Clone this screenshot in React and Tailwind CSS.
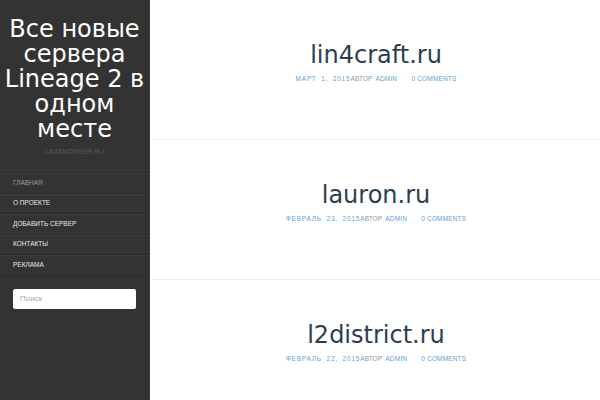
import React from "react";

const posts = [
  { title: "lin4craft.ru", date: "Март 1, 2015" },
  { title: "lauron.ru", date: "Февраль 23, 2015" },
  { title: "l2district.ru", date: "Февраль 22, 2015" },
];

const menu = ["Главная", "О проекте", "Добавить сервер", "Контакты", "Реклама"];

export default function App() {
  return (
    <div className="flex w-[600px] h-[400px] overflow-hidden bg-white font-['DejaVu_Sans',sans-serif]">
      {/* Sidebar */}
      <aside className="w-[150px] shrink-0 bg-[#333333] border-r border-[#3a3a3a] flex flex-col">
        <h1 className="pt-[17px] px-1 text-center text-white text-[24px] leading-[25px] font-normal">
          Все новые сервера Lineage 2 в одном месте
        </h1>
        <p className="mt-[5px] text-center text-[7px] text-[#5a5a5a] font-['Liberation_Sans',sans-serif] leading-[10px]">
          LA2ANONSER.RU
        </p>
        <nav className="mt-[15px] border-t border-[#2a2a2a]">
          {menu.map((item, i) => (
            <div
              key={item}
              className={`h-[20.5px] flex items-center pl-[13px] border-b border-[#2a2a2a] shadow-[inset_0_1px_0_#3c3c3c] text-[6.5px] uppercase font-['Liberation_Sans',sans-serif] ${
                i === 0 ? "text-[#9a9a9a]" : "text-[#e6e6e6]"
              }`}
            >
              {item}
            </div>
          ))}
        </nav>
        <div className="px-[13px] mt-[13px]">
          <div className="h-[20px] bg-white rounded-[2px] flex items-center pl-[7px] text-[8px] text-[#aaaaaa] font-['Liberation_Sans',sans-serif]">
            Поиск
          </div>
        </div>
      </aside>

      {/* Posts */}
      <main className="flex-1 pl-[2px]">
        {posts.map((p) => (
          <article
            key={p.title}
            className="h-[140px] border-b border-[#eeeeee] flex flex-col items-center pt-[40px]"
          >
            <h2 className="text-[24px] leading-[30px] text-[#2c3e50] font-normal">
              {p.title}
            </h2>
            <div className="mt-[4px] flex items-center text-[6.5px] uppercase tracking-[0.15px] font-['Liberation_Sans',sans-serif] leading-[10px]">
              <span className="text-[#5ba4d8] tracking-[0.8px] [word-spacing:2px]">{p.date}</span>
              <span className="text-[#8a9aa8]">Автор</span>
              <span className="text-[#5ba4d8] ml-[3px]">admin</span>
              <span className="text-[#c0c8d0] mx-[6px]">·</span>
              <span className="text-[#5ba4d8]">0 Comments</span>
            </div>
          </article>
        ))}
      </main>
    </div>
  );
}
